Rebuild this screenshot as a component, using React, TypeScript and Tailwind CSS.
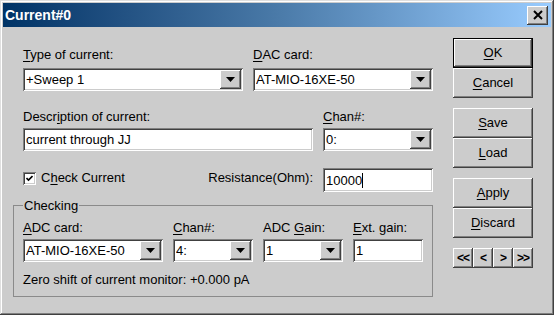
import React from 'react'

const sunken =
  'shadow-[inset_1px_1px_#808080,inset_-1px_-1px_#ffffff,inset_2px_2px_#404040,inset_-2px_-2px_#cccccc]'
const raised =
  'shadow-[inset_-1px_-1px_#404040,inset_1px_1px_#ffffff,inset_-2px_-2px_#808080]'

function U({ children }: { children: React.ReactNode }) {
  return <span className="underline decoration-1 underline-offset-[2px]">{children}</span>
}

function Label({ children }: { children: React.ReactNode }) {
  return <div className="h-[15px] leading-[15px] whitespace-nowrap">{children}</div>
}

function DropBtn() {
  return (
    <div className={`h-[19px] w-[21px] shrink-0 bg-[#cccccc] flex items-center justify-center ${raised}`}>
      <svg width="9" height="5" viewBox="0 0 9 5">
        <path d="M0 0H9L4.5 5Z" fill="#000" />
      </svg>
    </div>
  )
}

function Combo({ value, className = '' }: { value: string; className?: string }) {
  return (
    <div className={`h-[23px] bg-white flex items-center pl-[3px] pr-[2px] ${sunken} ${className}`}>
      <span className="flex-1 truncate leading-[15px]">{value}</span>
      <DropBtn />
    </div>
  )
}

function Field({ value, caret = false, className = '' }: { value: string; caret?: boolean; className?: string }) {
  return (
    <div className={`h-[23px] bg-white flex items-center pl-[3px] ${sunken} ${className}`}>
      <span className="leading-[15px]">{value}</span>
      {caret && <span className="w-px h-[15px] bg-black" />}
    </div>
  )
}

function Btn({ children, def = false, className = '' }: { children: React.ReactNode; def?: boolean; className?: string }) {
  if (def) {
    return (
      <div className={`h-[30px] w-[80px] border border-black ${className}`}>
        <div className={`h-full w-full flex items-center justify-center ${raised}`}>{children}</div>
      </div>
    )
  }
  return (
    <div className={`h-[30px] w-[80px] flex items-center justify-center ${raised} ${className}`}>{children}</div>
  )
}

function NavBtn({ children }: { children: React.ReactNode }) {
  return (
    <div className={`h-[20px] w-[20px] flex items-center justify-center text-[12px] font-bold tracking-[-1px] ${raised}`}>
      {children}
    </div>
  )
}

export default function App() {
  return (
    <div className="w-[554px] h-[315px] bg-[#cccccc] p-[3px] flex flex-col text-[13px] text-black font-['Liberation_Sans',Arial,sans-serif] shadow-[inset_-1px_-1px_#404040,inset_1px_1px_#dfdfdf,inset_-2px_-2px_#808080,inset_2px_2px_#ffffff]">
      {/* title bar */}
      <div className="h-[24px] shrink-0 flex items-center pl-[2px] pr-[3px] bg-linear-to-r from-[#003366] via-[#4a7aa8] to-[#99ccff]">
        <span className="text-white font-bold text-[14px] leading-[16px]">Current#0</span>
        <div className={`ml-auto h-[19px] w-[21px] bg-[#cccccc] flex items-center justify-center ${raised}`}>
          <svg width="10" height="10" viewBox="0 0 10 10">
            <path d="M1 1L9 9M9 1L1 9" stroke="#000" strokeWidth="2" />
          </svg>
        </div>
      </div>

      <div className="flex flex-1">
        {/* form */}
        <div className="w-[420px] ml-[10px] pt-[20px]">
          <div className="flex gap-[10px] pl-[10px]">
            <div className="w-[220px]">
              <Label><U>T</U>ype of current:</Label>
              <Combo className="mt-[6px]" value="+Sweep 1" />
            </div>
            <div className="w-[180px]">
              <Label><U>D</U>AC card:</Label>
              <Combo className="mt-[6px]" value="AT-MIO-16XE-50" />
            </div>
          </div>

          <div className="flex gap-[10px] pl-[10px] mt-[18px]">
            <div className="w-[290px]">
              <Label>Descr<U>i</U>ption of current:</Label>
              <Field className="mt-[4px]" value="current through JJ" />
            </div>
            <div className="w-[110px]">
              <Label><U>C</U>han#:</Label>
              <Combo className="mt-[4px]" value="0:" />
            </div>
          </div>

          <div className="flex pl-[10px] mt-[17px] h-[24px]">
            <div className="w-[290px] flex items-start pt-[2px]">
              <div className={`mt-[2px] h-[13px] w-[13px] bg-white flex items-center justify-center ${sunken}`}>
                <svg width="7" height="7" viewBox="0 0 7 7">
                  <path d="M0.5 3L2.5 5L6.5 1" stroke="#000" strokeWidth="1.6" fill="none" />
                </svg>
              </div>
              <span className="ml-[5px] leading-[15px]">C<U>h</U>eck Current</span>
              <span className="ml-auto leading-[15px]">Resistance(Ohm):</span>
            </div>
            <Field className="ml-[10px] w-[110px] h-[24px]" value="10000" caret />
          </div>

          <fieldset className="mt-[6px] border border-[#8a8a8a] pl-[9px] pb-[9px]">
            <legend className="px-[1px] h-[15px] leading-[15px]">Checking</legend>
            <div className="flex gap-[10px] mt-[7px]">
              <div className="w-[140px]">
                <Label><U>A</U>DC card:</Label>
                <Combo className="mt-[4px]" value="AT-MIO-16XE-50" />
              </div>
              <div className="w-[80px]">
                <Label><U>C</U>han#:</Label>
                <Combo className="mt-[4px]" value="4:" />
              </div>
              <div className="w-[80px]">
                <Label>ADC <U>G</U>ain:</Label>
                <Combo className="mt-[4px]" value="1" />
              </div>
              <div className="w-[70px]">
                <Label><U>E</U>xt. gain:</Label>
                <Field className="mt-[4px]" value="1" />
              </div>
            </div>
            <div className="mt-[10px] h-[15px] leading-[15px]">Zero shift of current monitor: +0.000 pA</div>
          </fieldset>
        </div>

        {/* buttons */}
        <div className="ml-[20px] pt-[11px] flex flex-col">
          <Btn def><U>O</U>K</Btn>
          <Btn><U>C</U>ancel</Btn>
          <Btn className="mt-[10px]"><U>S</U>ave</Btn>
          <Btn><U>L</U>oad</Btn>
          <Btn className="mt-[10px]"><U>A</U>pply</Btn>
          <Btn><U>D</U>iscard</Btn>
          <div className="mt-[10px] flex">
            <NavBtn>&lt;&lt;</NavBtn>
            <NavBtn>&lt;</NavBtn>
            <NavBtn>&gt;</NavBtn>
            <NavBtn>&gt;&gt;</NavBtn>
          </div>
        </div>
      </div>
    </div>
  )
}
